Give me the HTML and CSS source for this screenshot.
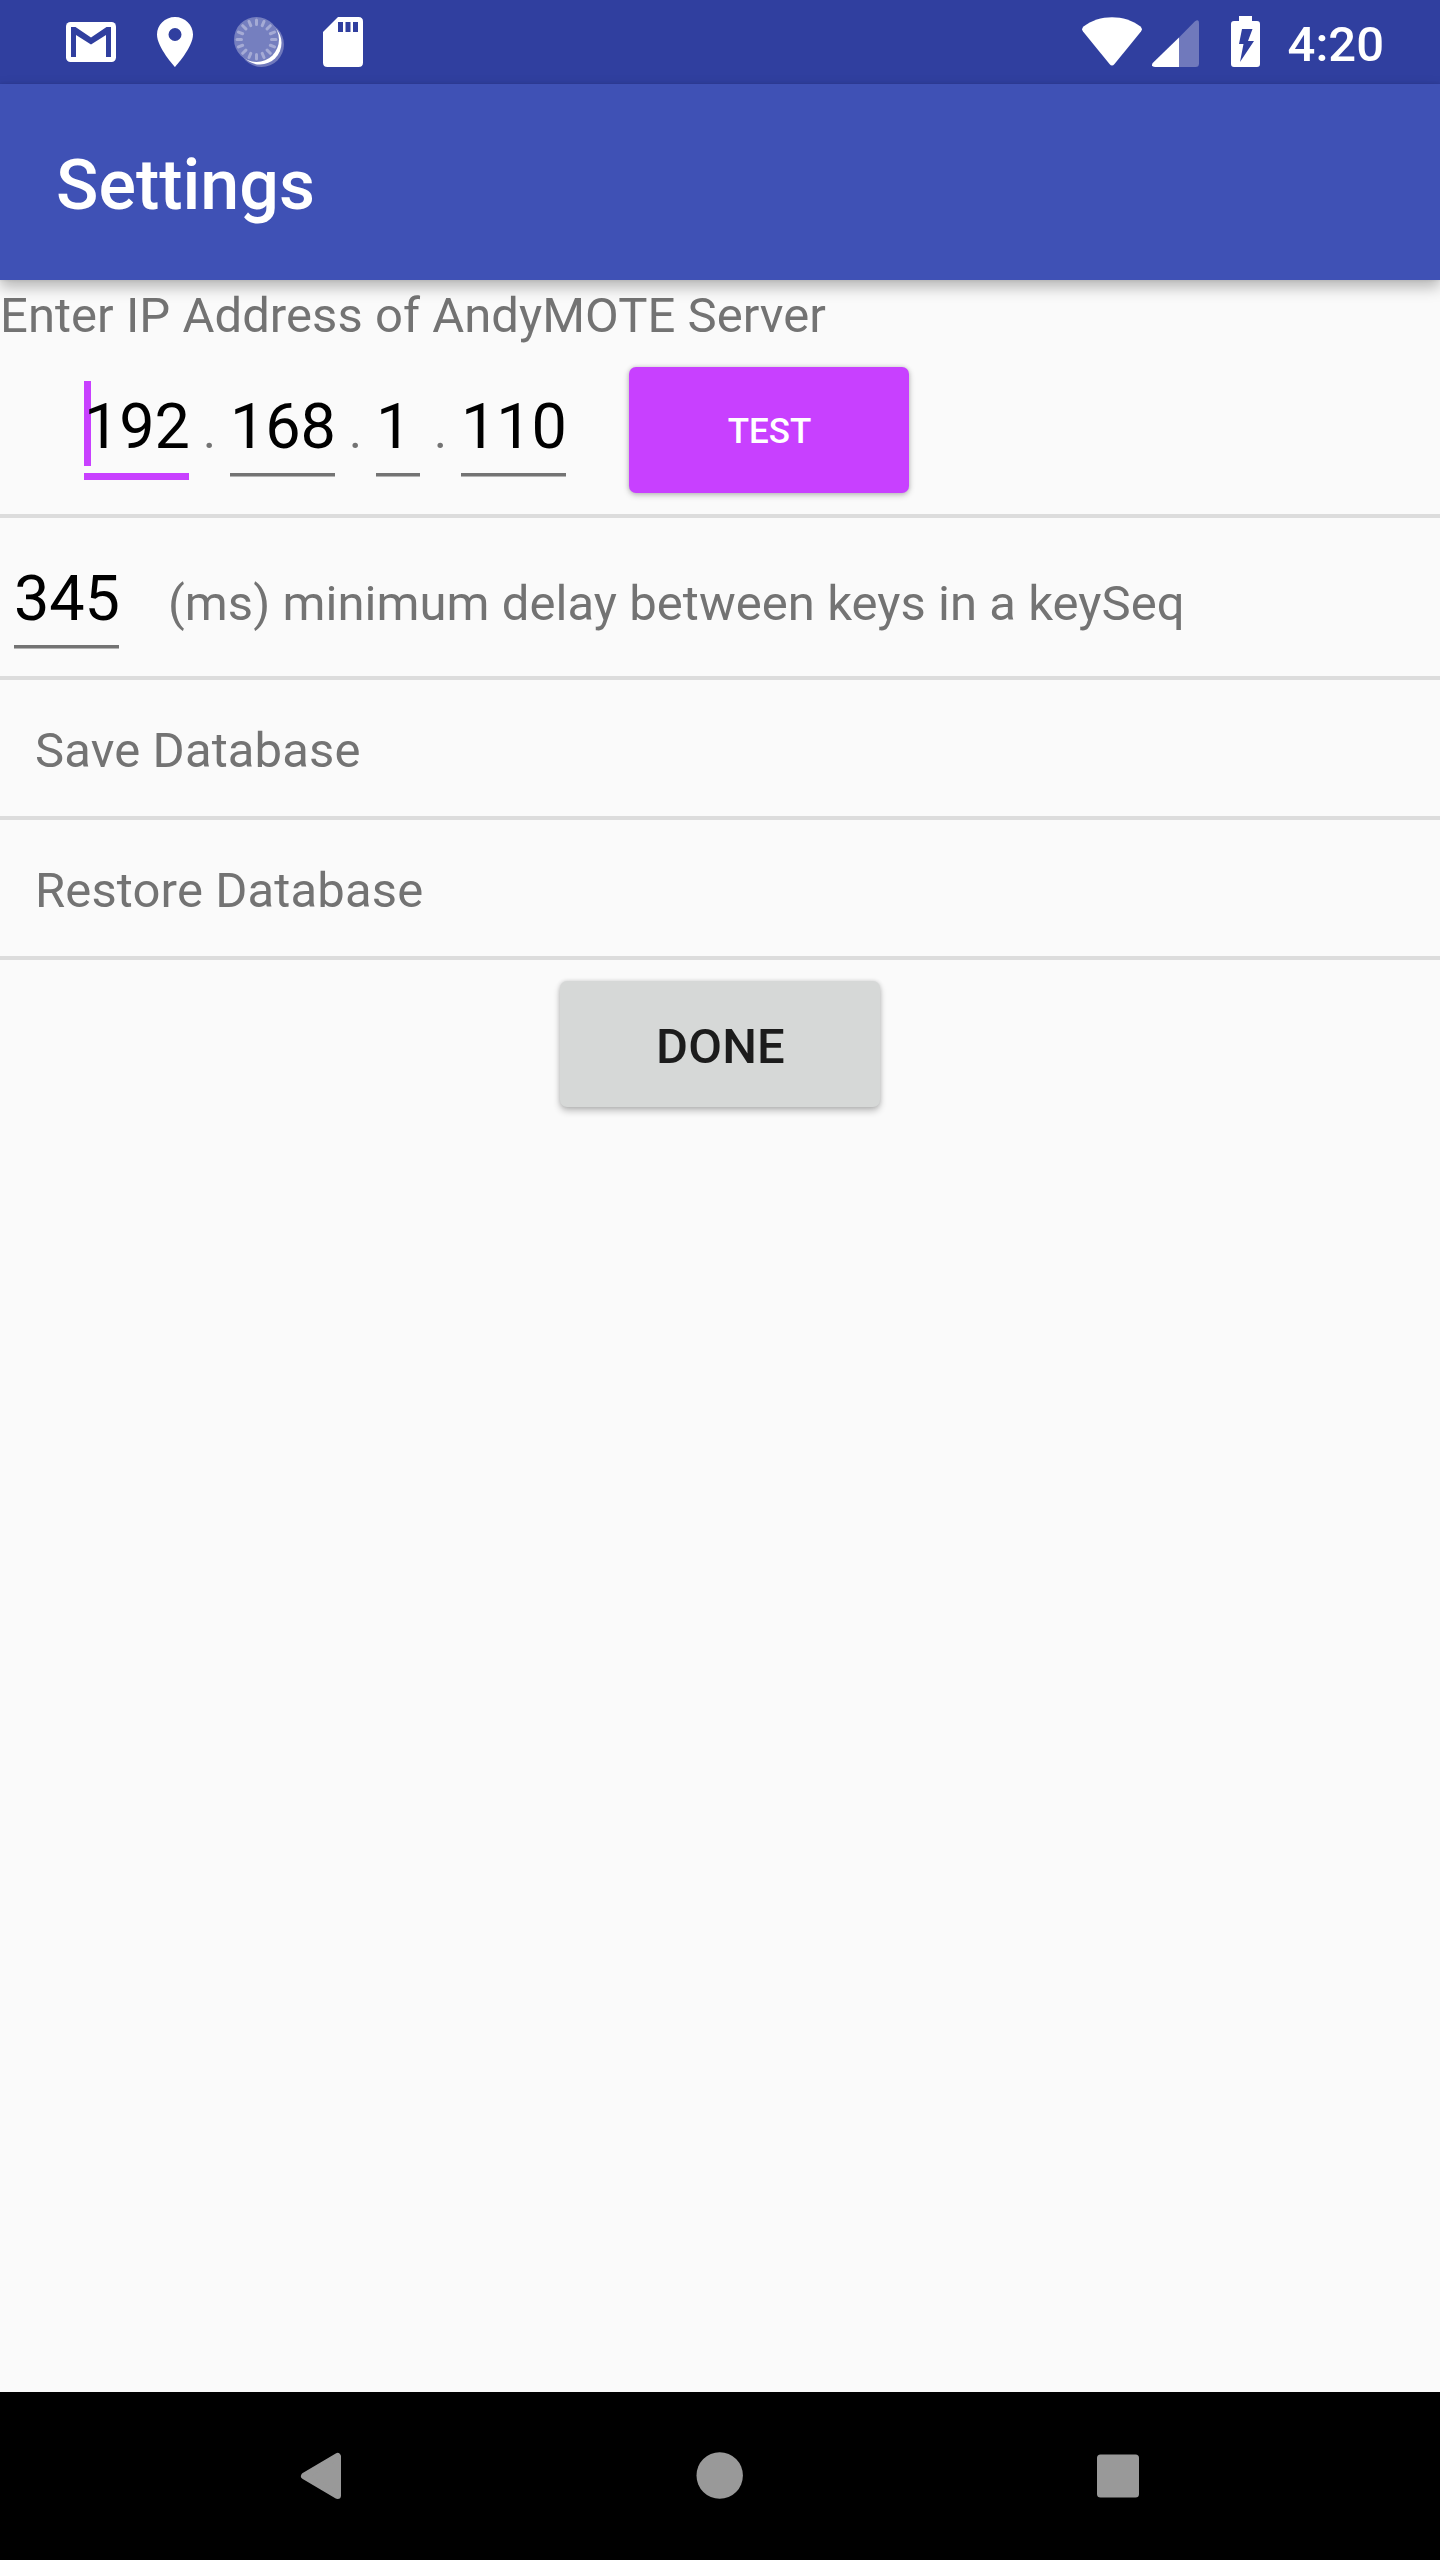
FILE: index.html
```html
<!DOCTYPE html>
<html lang="en">
<head>
<meta charset="utf-8">
<title>Settings</title>
<link rel="stylesheet" href="styles.css">
</head>
<body>
<div class="screen">
  <div class="status-bar">
    <div class="status-left">
      <svg class="icon mail" width="50" height="40" viewBox="0 0 50 40"><rect width="50" height="40" rx="4.500" fill="#fff"/><path d="M5 35V5h4.500l15.500 10.500L40.500 5H45v30h-5V13L25 22.500 10 13v22z" fill="#303f9f"/></svg>
      <svg class="icon pin" width="36" height="50" viewBox="0 0 36 50"><path fill="#fff" fill-rule="evenodd" d="M18 0C8 0 0 7.900 0 17.500 0 30.500 18 50 18 50s18-19.500 18-32.500C36 7.900 28 0 18 0zm0 24a6.500 6.500 0 1 1 0-13 6.500 6.500 0 0 1 0 13z"/></svg>
      <svg class="icon sync" width="50" height="50" viewBox="0 0 50 50"><circle cx="27.500" cy="27.500" r="22.500" fill="#7079bc"/><circle cx="26" cy="26" r="21.500" fill="#fff"/><circle cx="22.500" cy="22.500" r="22.500" fill="#757fbf"/><g stroke="#a5abd5" stroke-width="3" stroke-linecap="round"><path id="ray" d="M37.500 22.500h4.500M3 22.500h4.500M22.500 3v4.500M22.500 37.500V42"/><use href="#ray" transform="rotate(22.500 22.500 22.500)"/><use href="#ray" transform="rotate(45 22.500 22.500)"/><use href="#ray" transform="rotate(67.500 22.500 22.500)"/></g></svg>
      <svg class="icon card" width="40" height="50" viewBox="0 0 40 50"><path fill="#fff" d="M15 0h20.500Q40 0 40 4.500v41Q40 50 35.500 50h-31Q0 50 0 45.500V15z"/><path fill="#303f9f" d="M15 5h5v10h-5zM22.500 5h5v10h-5zM30 5h5v10h-5z"/></svg>
    </div>
    <div class="status-right">
      <svg class="icon wifi" width="60" height="49" viewBox="0 0 60 49"><path fill="#fff" d="M1.500 9.500C17-3 43-3 58.500 9.500q2.500 2.500.500 5L32.500 47q-2.500 3-5 0L1 14.500q-2-2.500.500-5z"/></svg>
      <svg class="icon cell" width="47" height="47" viewBox="0 0 47 47"><path fill="#7079bc" d="M27 17.500 43 1.200Q47-1.500 47 3.500v40q0 3.500-3.500 3.500H27z"/><path fill="#fff" d="M27 17.500V47H3Q-1.500 46.500.700 43z"/></svg>
      <svg class="icon battery" width="29" height="51" viewBox="0 0 29 51"><path fill="#fff" d="M8 0h13v5h5q3 0 3 3v40q0 3-3 3H3q-3 0-3-3V8q0-3 3-3h5z"/><path fill="#303f9f" d="M11 13h10.500L17 25h6L9 46l3.500-18H8z"/></svg>
      <span class="clock">4:20</span>
    </div>
  </div>
  <header class="app-bar"><h1 class="title">Settings</h1></header>
  <main class="content">
    <div class="label">Enter IP Address of AndyMOTE Server</div>
    <div class="ip-row">
      <div class="field focused">192<span class="cursor"></span></div>
      <span class="dot">.</span>
      <div class="field">168</div>
      <span class="dot">.</span>
      <div class="field short">1</div>
      <span class="dot">.</span>
      <div class="field">110</div>
      <button class="button accent">TEST</button>
    </div>
    <div class="divider"></div>
    <div class="delay-row">
      <div class="field">345</div>
      <span class="delay-label">(ms) minimum delay between keys in a keySeq</span>
    </div>
    <div class="divider"></div>
    <div class="item">Save Database</div>
    <div class="divider"></div>
    <div class="item">Restore Database</div>
    <div class="divider"></div>
    <button class="button done">DONE</button>
  </main>
  <nav class="nav-bar">
    <svg class="nav-icon" width="48" height="48" viewBox="0 0 48 48"><path fill="#999" stroke="#999" stroke-width="7" stroke-linejoin="round" d="M7.500 25 40.500 5.500v39z"/></svg>
    <svg class="nav-icon" width="48" height="48" viewBox="0 0 48 48"><circle cx="23.700" cy="24.500" r="23.200" fill="#999"/></svg>
    <svg class="nav-icon" width="48" height="48" viewBox="0 0 48 48"><rect x="2" y="3.500" width="42" height="43" rx="3.500" fill="#999"/></svg>
  </nav>
</div>
</body>
</html>
```
FILE: styles.css
```css
* { box-sizing: border-box; }
body { margin: 0; font-family: Roboto, sans-serif; }
.screen { width: 1440px; height: 2560px; display: flex; flex-direction: column; background: #fafafa; overflow: hidden; }
svg { display: block; flex: none; }

.status-bar { height: 84px; flex: none; background: #303f9f; display: flex; justify-content: space-between; }
.status-left, .status-right { display: flex; align-items: flex-start; }
.status-left { padding-left: 66px; }
.status-right { padding-right: 56px; }
.mail { margin-top: 22px; }
.pin { margin: 17px 0 0 41px; }
.sync { margin: 17px 0 0 41px; }
.card { margin: 17px 0 0 39px; }
.wifi { margin-top: 17px; }
.cell { margin: 20px 0 0 10px; }
.battery { margin: 16px 0 0 32px; }
.clock { margin-left: 28px; padding-top: 16px; font-size: 49px; line-height: 57px; font-weight: 500; color: #fff; }

.app-bar { height: 196px; flex: none; position: relative; background: #3f51b5; padding: 60px 0 0 56px; box-shadow: 0 7px 14px rgba(0, 0, 0, .28), 0 0 3px rgba(0, 0, 0, .1); }
.title { margin: 0; font-size: 70px; line-height: 82px; font-weight: 500; color: #fff; }

.content { flex: 1; display: flex; flex-direction: column; font-size: 49px; letter-spacing: .045px; color: #737373; }
.label { height: 73px; padding-top: 7px; line-height: 57px; white-space: nowrap; }
.ip-row { height: 161px; display: flex; padding-left: 84px; }
.field { position: relative; flex: none; width: 105px; height: 95px; margin-top: 28px; padding-top: 9px; font-size: 63px; line-height: 74px; letter-spacing: -.1px; color: #000; border-bottom: 3px solid #737373; box-shadow: 0 1px #b4b4b4; }
.focused { height: 99px; border-bottom: 7px solid #c840ff; box-shadow: none; isolation: isolate; }
.short { width: 44px; }
.cursor { position: absolute; z-index: -1; left: 0; top: 0; width: 7px; height: 85px; background: #c840ff; }
.dot { width: 13px; margin: 50px 14px 0; line-height: 57px; }
.button { display: flex; align-items: center; justify-content: center; height: 126px; border: 0; border-radius: 7px; padding: 0; font-family: inherit; font-weight: 500; box-shadow: 0 4px 7px rgba(0, 0, 0, .24), 0 0 4px rgba(0, 0, 0, .14); }
.accent { width: 280px; margin: 14px 0 0 63px; padding: 3px 0 0 1px; font-size: 35px; color: #fff; background: #c840ff; box-shadow: 0 2px 6px rgba(0, 0, 0, .24), 0 0 4px rgba(0, 0, 0, .12); }
.divider { height: 4px; flex: none; background: #dcdcdc; }
.delay-row { height: 158px; display: flex; padding-left: 14px; }
.delay-row .field { margin-top: 34px; height: 96px; padding-top: 10px; }
.delay-label { margin: 57px 0 0 49px; line-height: 57px; white-space: nowrap; }
.item { height: 136px; padding: 42px 0 0 35px; line-height: 57px; letter-spacing: .13px; }
.done { width: 320px; margin: 21px auto 0; padding: 5px 0 0 1px; font-size: 49px; letter-spacing: .2px; color: #1c1c1c; background: #d6d8d7; }

.nav-bar { height: 168px; flex: none; background: #000; display: flex; justify-content: center; gap: 351px; padding-top: 59px; }
```
